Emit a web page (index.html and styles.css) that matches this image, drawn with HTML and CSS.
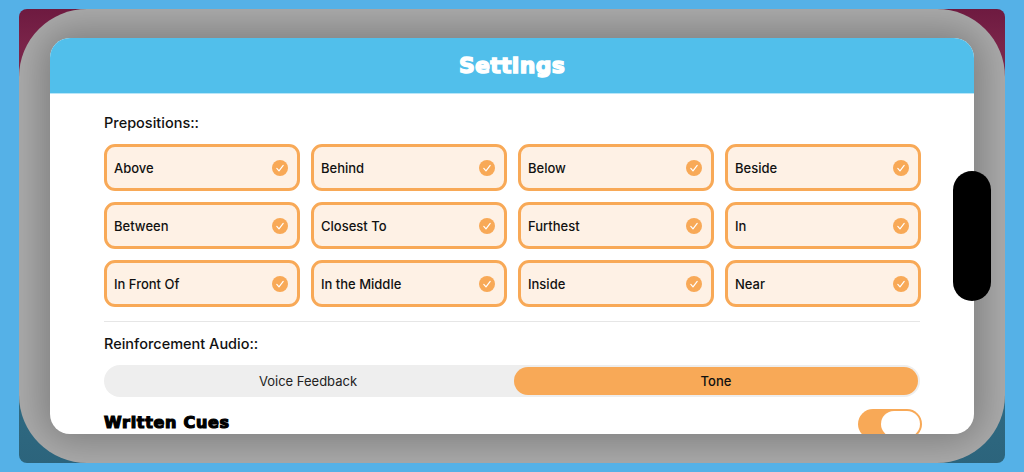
FILE: index.html
```html
<!DOCTYPE html>
<html lang="en">
<head>
<meta charset="utf-8">
<title>Settings</title>
<link rel="stylesheet" href="styles.css">
</head>
<body>
<div class="stage">
  <div class="bezel">
    <main class="card">
      <header class="card-head"><h1 class="title">Settings</h1></header>
      <div class="card-body">
        <h2 class="label">Prepositions::</h2>
        <div class="grid">
          <div class="chip"><span>Above</span><svg class="check" viewBox="0 0 16 16"><circle cx="8" cy="8" r="8"/><path d="M4.8 8.4l2.2 2.4 4.2-5.4"/></svg></div>
          <div class="chip"><span>Behind</span><svg class="check" viewBox="0 0 16 16"><circle cx="8" cy="8" r="8"/><path d="M4.8 8.4l2.2 2.4 4.2-5.4"/></svg></div>
          <div class="chip"><span>Below</span><svg class="check" viewBox="0 0 16 16"><circle cx="8" cy="8" r="8"/><path d="M4.8 8.4l2.2 2.4 4.2-5.4"/></svg></div>
          <div class="chip"><span>Beside</span><svg class="check" viewBox="0 0 16 16"><circle cx="8" cy="8" r="8"/><path d="M4.8 8.4l2.2 2.4 4.2-5.4"/></svg></div>
          <div class="chip"><span>Between</span><svg class="check" viewBox="0 0 16 16"><circle cx="8" cy="8" r="8"/><path d="M4.8 8.4l2.2 2.4 4.2-5.4"/></svg></div>
          <div class="chip"><span>Closest To</span><svg class="check" viewBox="0 0 16 16"><circle cx="8" cy="8" r="8"/><path d="M4.8 8.4l2.2 2.4 4.2-5.4"/></svg></div>
          <div class="chip"><span>Furthest</span><svg class="check" viewBox="0 0 16 16"><circle cx="8" cy="8" r="8"/><path d="M4.8 8.4l2.2 2.4 4.2-5.4"/></svg></div>
          <div class="chip"><span>In</span><svg class="check" viewBox="0 0 16 16"><circle cx="8" cy="8" r="8"/><path d="M4.8 8.4l2.2 2.4 4.2-5.4"/></svg></div>
          <div class="chip"><span>In Front Of</span><svg class="check" viewBox="0 0 16 16"><circle cx="8" cy="8" r="8"/><path d="M4.8 8.4l2.2 2.4 4.2-5.4"/></svg></div>
          <div class="chip"><span>In the Middle</span><svg class="check" viewBox="0 0 16 16"><circle cx="8" cy="8" r="8"/><path d="M4.8 8.4l2.2 2.4 4.2-5.4"/></svg></div>
          <div class="chip"><span>Inside</span><svg class="check" viewBox="0 0 16 16"><circle cx="8" cy="8" r="8"/><path d="M4.8 8.4l2.2 2.4 4.2-5.4"/></svg></div>
          <div class="chip"><span>Near</span><svg class="check" viewBox="0 0 16 16"><circle cx="8" cy="8" r="8"/><path d="M4.8 8.4l2.2 2.4 4.2-5.4"/></svg></div>
        </div>
        <hr class="divider">
        <h2 class="label">Reinforcement Audio::</h2>
        <div class="segments">
          <div class="segment">Voice Feedback</div>
          <div class="segment segment-on">Tone</div>
        </div>
        <div class="cue-row">
          <span class="cue-title">Written Cues</span>
          <div class="toggle"><div class="knob"></div></div>
        </div>
      </div>
    </main>
  </div>
  <div class="notch"></div>
</div>
</body>
</html>
```
FILE: styles.css
```css
* { box-sizing: border-box; }
html, body { margin: 0; height: 100%; }
body {
  padding: 9px 19px;
  background: #55b1e7;
  font-family: Inter, "Liberation Sans", sans-serif;
  color: #111;
  overflow: hidden;
}
.stage {
  position: relative;
  width: 986px;
  height: 454px;
  border-radius: 8px;
  background: linear-gradient(180deg, #6e1a40 0%, #7a2449 8%, #6e2a50 30%, #2f6a82 85%, #2c647c 100%);
  overflow: hidden;
}
.bezel {
  height: 100%;
  padding: 29px 31px;
  border-radius: 68px;
  background: #acacac;
  overflow: hidden;
}
.card {
  height: 396px;
  border-radius: 20px;
  background: #fff;
  overflow: hidden;
  box-shadow: 0 0 38px 8px rgba(0, 0, 0, 0.28);
}
.card-head {
  height: 56px;
  display: flex;
  align-items: center;
  justify-content: center;
  background: #51bfeb;
  border-bottom: 1px solid #b9e6f8;
}
.title {
  margin: 0;
  font-family: "DejaVu Sans", sans-serif;
  font-size: 22px;
  font-weight: 700;
  color: #fff;
  letter-spacing: 0.3px;
  -webkit-text-stroke: 1.4px #fff;
}
.card-body { padding: 20px 54px 0; }
.label {
  margin: 0;
  font-size: 14.5px;
  line-height: 18px;
  font-weight: 500;
  color: #111;
}
.grid {
  display: grid;
  grid-template-columns: repeat(4, 196px);
  grid-auto-rows: 47px;
  gap: 11px;
  margin-top: 12px;
}
.chip {
  display: flex;
  align-items: center;
  justify-content: space-between;
  padding: 0 9px 0 7px;
  border: 3px solid #f8a957;
  border-radius: 11px;
  background: #fef1e5;
  font-size: 13px;
  font-weight: 500;
  color: #111;
}
.check { width: 16px; height: 16px; flex: none; }
.check circle { fill: #f8a957; }
.check path { fill: none; stroke: #fff; stroke-width: 1.2; stroke-linecap: round; stroke-linejoin: round; }
.divider {
  margin: 14px 0 13px;
  border: 0;
  border-top: 1px solid #e6e6e6;
}
.segments {
  display: flex;
  width: 816px;
  height: 32px;
  margin-top: 12px;
  padding: 2px;
  border-radius: 16px;
  background: #eeeeee;
  gap: 4px;
}
.segment {
  flex: 1;
  display: flex;
  align-items: center;
  justify-content: center;
  border-radius: 14px;
  font-size: 13px;
  color: #222;
}
.segment-on { background: #f8a957; color: #111; font-weight: 500; }
.cue-row {
  display: flex;
  justify-content: space-between;
  align-items: flex-start;
  margin-top: 12px;
  width: 818px;
}
.cue-title {
  margin-top: 4px;
  font-family: "DejaVu Sans", sans-serif;
  font-size: 16px;
  line-height: 19px;
  font-weight: 700;
  color: #000;
  letter-spacing: 0.7px;
  -webkit-text-stroke: 1.2px #000;
}
.toggle {
  width: 64px;
  height: 30px;
  padding: 2px;
  border-radius: 15px;
  background: #f8a957;
  display: flex;
  justify-content: flex-end;
}
.knob {
  width: 39px;
  height: 26px;
  border-radius: 13px;
  background: #fff;
}
.notch {
  position: absolute;
  left: 934px;
  top: 162px;
  width: 38px;
  height: 130px;
  border-radius: 19px;
  background: #000;
}
```
